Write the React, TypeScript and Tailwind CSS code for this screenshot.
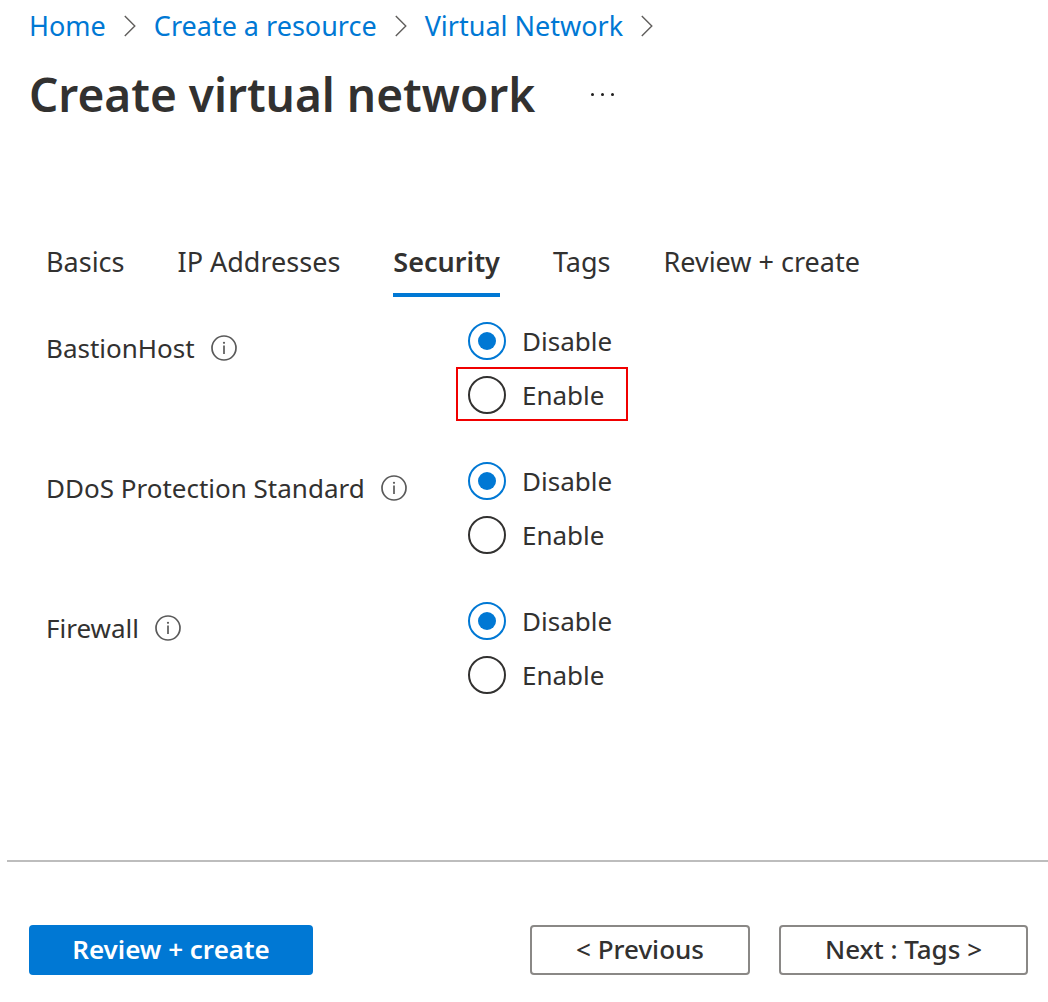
const crumbs = ["Home", "Create a resource", "Virtual Network"];
const tabs = ["Basics", "IP Addresses", "Security", "Tags", "Review + create"];
const settings = ["BastionHost", "DDoS Protection Standard", "Firewall"];

function Chevron() {
  return (
    <svg viewBox="0 0 12 22" className="mx-[18px] h-[22px] w-3" fill="none" stroke="#605e5c" strokeWidth="1.4" aria-hidden="true">
      <path d="M0.8 1 10.8 11 0.8 21" />
    </svg>
  );
}

function InfoIcon() {
  return (
    <svg viewBox="0 0 26 26" className="size-[26px]" fill="none" stroke="#5a5a5a" aria-hidden="true">
      <circle cx="13" cy="13" r="12" strokeWidth="1.7" />
      <path d="M13 10.5v8.5" strokeWidth="1.7" />
      <circle cx="13" cy="7.8" r="1.1" fill="#5a5a5a" stroke="none" />
    </svg>
  );
}

function Choice({ group, label, checked, marked }: { group: string; label: string; checked?: boolean; marked?: boolean }) {
  return (
    <label className={`flex h-[54px] w-[172px] items-center gap-4 border-2 pt-0.5 pl-[10px] ${marked ? "border-[#f00000]" : "border-transparent"}`}>
      <input
        type="radio"
        name={group}
        defaultChecked={checked}
        className="grid size-[38px] shrink-0 appearance-none place-items-center rounded-full border-2 border-[#323130] before:size-[18px] before:rounded-full checked:border-[#0078d4] checked:before:bg-[#0078d4]"
      />
      <span>{label}</span>
    </label>
  );
}

export default function App() {
  return (
    <div className="bg-white pb-[27px] font-['Noto_Sans',sans-serif] text-[26px] leading-9 text-[#323130]">
      <nav aria-label="Breadcrumb" className="flex items-center pt-2 pl-[29px] text-[27px]">
        {crumbs.map((crumb) => (
          <span key={crumb} className="flex items-center">
            <a href="#" className="whitespace-nowrap text-[#0078d4]">{crumb}</a>
            <Chevron />
          </span>
        ))}
      </nav>
      <header className="flex items-center gap-14 pt-[18px] pl-[29px]">
        <h1 className="text-[46px] leading-[64px] font-semibold">Create virtual network</h1>
        <button aria-label="More actions" className="flex gap-[7px]">
          <span className="size-[3px] rounded-full bg-[#201f1e]" />
          <span className="size-[3px] rounded-full bg-[#201f1e]" />
          <span className="size-[3px] rounded-full bg-[#201f1e]" />
        </button>
      </header>
      <div role="tablist" className="mt-[111px] flex gap-[53px] pl-[46px] text-[27px]">
        {tabs.map((tab) => (
          <button key={tab} role="tab" aria-selected={tab === "Security"} className={`h-[60px] border-b-4 pb-1.5 whitespace-nowrap ${tab === "Security" ? "border-[#0078d4] font-semibold" : "border-transparent"}`}>
            {tab}
          </button>
        ))}
      </div>
      <main className="mt-4 flex flex-col gap-8 pl-[46px]">
        {settings.map((name, i) => (
          <div key={name} role="radiogroup" aria-label={name} className="grid grid-cols-[410px_1fr]">
            <div className="flex h-[54px] items-center gap-4 pt-4">
              <span>{name}</span>
              <InfoIcon />
            </div>
            <div>
              <Choice group={name} label="Disable" checked />
              <Choice group={name} label="Enable" marked={i === 0} />
            </div>
          </div>
        ))}
      </main>
      <footer className="mt-[159px] ml-[7px] flex items-center border-t-2 border-[#bdbdbd] pt-[63px] pr-5 pl-[22px] font-semibold">
        <button className="h-[50px] w-[284px] rounded-[4px] bg-[#0078d4] pb-0.5 text-white">Review + create</button>
        <button className="ml-auto h-[50px] w-[220px] rounded-[4px] border-2 border-[#8a8886] pb-0.5 font-medium">&lt; Previous</button>
        <button className="ml-[29px] h-[50px] w-[249px] rounded-[4px] border-2 border-[#8a8886] pb-0.5 font-medium">Next : Tags &gt;</button>
      </footer>
    </div>
  );
}
